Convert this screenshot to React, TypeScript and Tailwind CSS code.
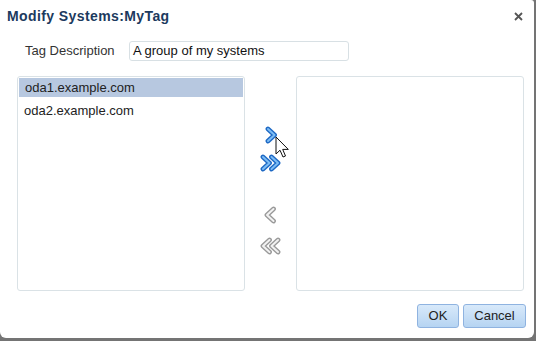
import React from 'react'

const font = { fontFamily: '"Liberation Sans", Arial, sans-serif' }

function Chevron({ double, active }: { double?: boolean; active?: boolean }) {
  const outer = active ? '#1d68c4' : '#9a9a9a'
  const inner = active ? '#7dbdf5' : '#f2f2f2'
  const w = double ? 22 : 13
  const pts = (x: number) =>
    active ? `${x},3 ${x + 6.5},9 ${x},15` : `${x + 6.5},3 ${x},9 ${x + 6.5},15`
  const xs = double ? [3, 11.5] : [3]
  return (
    <svg width={w} height="18" viewBox={`0 0 ${w} 18`}>
      {xs.map((x) => (
        <g key={x}>
          <polyline points={pts(x)} fill="none" stroke={outer} strokeWidth="4.8" strokeLinecap="round" strokeLinejoin="round" />
          <polyline points={pts(x)} fill="none" stroke={inner} strokeWidth="2" strokeLinecap="round" strokeLinejoin="round" />
        </g>
      ))}
    </svg>
  )
}

function Cursor() {
  return (
    <svg width="15" height="23" viewBox="0 0 15 23">
      <path
        d="M1 1 L1 18 L5 14.2 L8 21 L10.5 20 L7.7 13.4 L13.3 13.4 Z"
        fill="#ffffff"
        stroke="#111111"
        strokeWidth="1"
        strokeLinejoin="miter"
      />
    </svg>
  )
}

export default function App() {
  return (
    <div className="w-[536px] h-[341px] bg-[#747474] overflow-hidden" style={font}>
      <div className="w-[534px] h-[338px] bg-white rounded-b-[6px] rounded-tr-[3px] flex flex-col">
        {/* title */}
        <div className="h-[32px] flex items-center justify-between pl-[7px] pr-[11px]">
          <span className="text-[14px] font-bold text-[#1c3a5e] tracking-[0.4px]">Modify Systems:MyTag</span>
          <svg width="9" height="9" viewBox="0 0 9 9">
            <path d="M1 1 L8 8 M8 1 L1 8" stroke="#555" strokeWidth="1.8" />
          </svg>
        </div>

        {/* description */}
        <div className="flex items-center pl-[25px] mt-[9px]">
          <span className="w-[104px] text-[13px] text-[#333]">Tag Description</span>
          <div className="w-[220px] h-[20px] border border-[#d8e0e4] rounded-[3px] flex items-center pl-[3px] text-[13px] text-[#111]">
            A group of my systems
          </div>
        </div>

        {/* shuttle */}
        <div className="flex pl-[17px] mt-[15px]">
          <div className="w-[228px] h-[215px] border border-[#dae2e6] rounded-[3px] p-px text-[13px] text-[#222]">
            <div className="h-[19px] bg-[#b7c8e0] flex items-center pl-[6px]">oda1.example.com</div>
            <div className="h-[19px] flex items-center pl-[5px] mt-[4px]">oda2.example.com</div>
          </div>

          <div className="w-[51px] relative flex flex-col items-center pt-[50px]">
            <div className="ml-px">
              <Chevron active />
            </div>
            <div className="mt-[10px]">
              <Chevron active double />
            </div>
            <div className="mt-[34px]">
              <Chevron />
            </div>
            <div className="mt-[13px]">
              <Chevron double />
            </div>
            <div className="absolute left-[30px] top-[60px]">
              <Cursor />
            </div>
          </div>

          <div className="w-[228px] h-[215px] border border-[#dae2e6] rounded-[3px]" />
        </div>

        {/* footer */}
        <div className="flex justify-end gap-[4px] pr-[8px] mt-[13px]">
          <button className="w-[42px] h-[24px] rounded-[3px] border border-[#8fb3e0] bg-gradient-to-b from-[#d8e9fa] to-[#b6d4f2] text-[13px] text-[#222]">
            OK
          </button>
          <button className="w-[63px] h-[24px] rounded-[3px] border border-[#8fb3e0] bg-gradient-to-b from-[#d8e9fa] to-[#b6d4f2] text-[13px] text-[#222]">
            Cancel
          </button>
        </div>
      </div>
    </div>
  )
}
